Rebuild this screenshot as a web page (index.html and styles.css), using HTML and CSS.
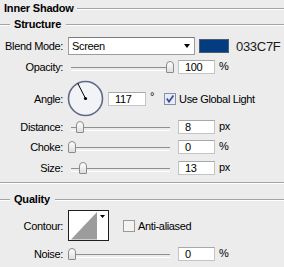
FILE: index.html
```html
<!DOCTYPE html>
<html>
<head>
    <title>Layer Style - Inner Shadow</title>
    <link rel="stylesheet" href="styles.css">
</head>
<body>
    <div class="legend legend-top">
        <span class="legend-text">Inner Shadow</span>
        <span class="rule"></span>
    </div>

    <div class="group">
        <div class="legend">
            <span class="rule rule-lead"></span>
            <span class="legend-text">Structure</span>
            <span class="rule"></span>
        </div>

        <div class="row row-blend">
            <span class="label">Blend Mode:</span>
            <div class="select">
                <span>Screen</span>
                <span class="arrow"></span>
            </div>
            <div class="swatch"></div>
            <span class="hex">033C7F</span>
        </div>

        <div class="row row-opacity">
            <span class="label">Opacity:</span>
            <div class="slider"><span class="thumb" style="left: 98px"></span></div>
            <div class="field">100</div>
            <span class="unit">%</span>
        </div>

        <div class="row row-angle">
            <span class="label">Angle:</span>
            <svg class="dial" width="37" height="37" viewBox="0 0 37 37">
                <circle cx="18.5" cy="18.5" r="17" fill="#f2f3f6" stroke="#5d6986" stroke-width="1.6"/>
                <line x1="18.5" y1="18.5" x2="10.8" y2="3.4" stroke="#000" stroke-width="1"/>
                <circle cx="18.5" cy="18.5" r="1.6" fill="#000"/>
            </svg>
            <div class="field field-angle">117</div>
            <span class="degree">°</span>
            <svg class="check check-global" width="12" height="12" viewBox="0 0 12 12">
                <rect x="0.5" y="0.5" width="11" height="11" fill="#e9ecf4" stroke="#8490ae"/>
                <path d="M2.8 5.6 L5 8.8 L9.4 2.4" fill="none" stroke="#3b4a9c" stroke-width="1.7"/>
            </svg>
            <span class="check-label">Use Global Light</span>
        </div>

        <div class="row row-distance">
            <span class="label">Distance:</span>
            <div class="slider"><span class="thumb" style="left: 8px"></span></div>
            <div class="field">8</div>
            <span class="unit">px</span>
        </div>

        <div class="row row-choke">
            <span class="label">Choke:</span>
            <div class="slider"><span class="thumb" style="left: 0px"></span></div>
            <div class="field">0</div>
            <span class="unit">%</span>
        </div>

        <div class="row row-size">
            <span class="label">Size:</span>
            <div class="slider"><span class="thumb" style="left: 11px"></span></div>
            <div class="field">13</div>
            <span class="unit">px</span>
        </div>
    </div>

    <div class="group group-quality">
        <div class="legend">
            <span class="rule rule-lead"></span>
            <span class="legend-text">Quality</span>
            <span class="rule"></span>
        </div>

        <div class="row row-contour">
            <span class="label">Contour:</span>
            <svg class="contour" width="42" height="32" viewBox="0 0 42 32">
                <rect x="0.5" y="0.5" width="40" height="30" fill="#fff" stroke="#1e1e1e"/>
                <polygon points="3,29.5 29,2 29,29.5" fill="#9c9c9c"/>
                <polygon points="32,5 37,5 34.5,8" fill="#000"/>
            </svg>
            <svg class="check check-aa" width="12" height="12" viewBox="0 0 12 12">
                <rect x="0.5" y="0.5" width="11" height="11" fill="#f3f3f3" stroke="#9a9a9a"/>
            </svg>
            <span class="check-label">Anti-aliased</span>
        </div>

        <div class="row row-noise">
            <span class="label">Noise:</span>
            <div class="slider"><span class="thumb" style="left: 0px"></span></div>
            <div class="field">0</div>
            <span class="unit">%</span>
        </div>
    </div>
</body>
</html>
```

FILE: styles.css
```css
* {
    margin: 0;
    padding: 0;
    box-sizing: border-box;
}

body {
    width: 284px;
    height: 267px;
    overflow: hidden;
    background-color: #ececec;
    color: #000;
    font-family: "Liberation Sans", Arial, sans-serif;
    font-size: 11px;
    letter-spacing: -0.35px;
}

.legend {
    display: flex;
    align-items: center;
    height: 16px;
}

.legend-text {
    font-weight: bold;
    letter-spacing: -0.2px;
    padding: 0 5px 0 4px;
}

.legend-top .legend-text {
    padding: 0 3px 0 4px;
}

.rule {
    flex: 1;
    height: 2px;
    margin-top: 2px;
    border-top: 1px solid #a3a3a3;
    border-bottom: 1px solid #ffffff;
}

.rule-lead {
    flex: none;
    width: 10px;
}

.group {
    padding-bottom: 7px;
    border-bottom: 1px solid #a3a3a3;
    box-shadow: 0 1px 0 #ffffff;
}

.group-quality {
    margin-top: 8px;
    border-bottom: none;
    box-shadow: none;
}

.row {
    display: flex;
    align-items: center;
}

.label {
    width: 63px;
    text-align: right;
}

.row-blend { margin-top: 5px; height: 18px; }
.row-opacity { margin-top: 5px; height: 14px; }
.row-angle { margin-top: 6px; height: 37px; }
.row-distance { margin-top: 3px; height: 14px; }
.row-choke { margin-top: 6px; height: 14px; }
.row-size { margin-top: 7px; height: 14px; }
.row-contour { margin-top: 3px; height: 32px; }
.row-noise { margin-top: 5px; height: 14px; }

.select {
    display: flex;
    align-items: center;
    justify-content: space-between;
    width: 127px;
    height: 18px;
    margin-left: 5px;
    padding: 0 4px 0 3px;
    background-color: #ffffff;
    border: 1px solid #9c9c9c;
    border-top-color: #7a7a7a;
    font-size: 11px;
}

.arrow {
    width: 0;
    height: 0;
    border-left: 3.5px solid transparent;
    border-right: 3.5px solid transparent;
    border-top: 4px solid #000;
}

.swatch {
    width: 30px;
    height: 14px;
    margin-left: 4px;
    background-color: #033c7f;
    border: 1px solid #4b5a70;
}

.hex {
    margin-left: 7px;
    font-size: 13px;
    letter-spacing: -0.3px;
    color: #1a1a1a;
}

.slider {
    position: relative;
    width: 104px;
    height: 14px;
    margin-left: 5px;
}

.slider::before {
    content: "";
    position: absolute;
    left: 3px;
    right: 2px;
    top: 7px;
    height: 2px;
    border-top: 1px solid #8e8e8e;
    border-bottom: 1px solid #ffffff;
}

.thumb {
    position: absolute;
    top: 1px;
    width: 8px;
    height: 12px;
    border: 1px solid #8a8a8a;
    border-radius: 4px 4px 1px 1px;
    background: linear-gradient(#ffffff, #dedede);
}

.field {
    display: flex;
    align-items: center;
    width: 37px;
    height: 14px;
    margin-left: 6px;
    padding-left: 6px;
    background-color: #ffffff;
    border: 1px solid #c4c4c4;
    border-top-color: #a8a8a8;
}

.unit {
    margin-left: 4px;
    margin-top: -3px;
}

.dial {
    margin-left: 4px;
}

.field-angle {
    width: 38px;
    margin-left: 4px;
}

.degree {
    margin-left: 4px;
    margin-top: -6px;
}

.check-global {
    margin-left: 10px;
}

.check-aa {
    margin-left: 13px;
}

.check-label {
    margin-left: 3px;
}

.contour {
    margin-left: 5px;
}
```
